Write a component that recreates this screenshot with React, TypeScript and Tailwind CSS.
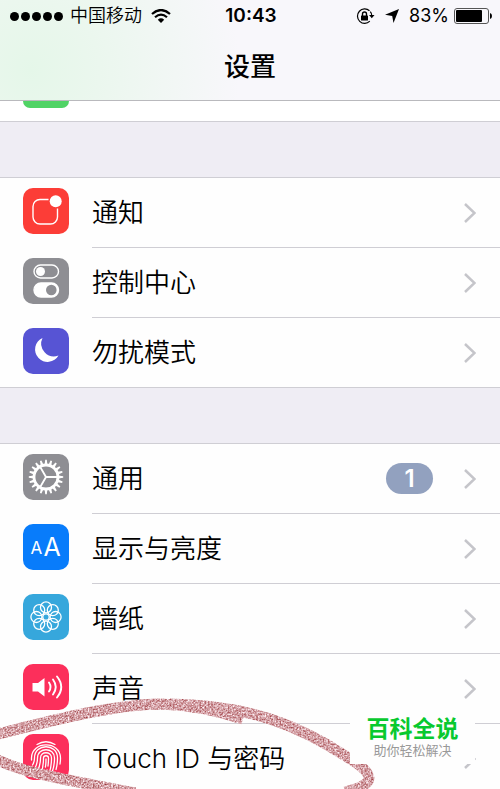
import type { ReactNode } from "react";

type Item = {
  label: string;
  color: string;
  icon: ReactNode;
  badge?: number;
};

const TEETH = Array.from({ length: 20 }, (_, i) => i * 18);
const PETALS = Array.from({ length: 8 }, (_, i) => i * 45);

function NotificationIcon() {
  return (
    <g fill="none" stroke="#fff" strokeWidth="1.4">
      <path d="M25.5 11.5H17a7 7 0 0 0-7 7v10.500a7 7 0 0 0 7 7h10.500a7 7 0 0 0 7-7V20.500" />
      <circle cx="32.700" cy="13.300" r="6" fill="#fff" stroke="none" />
    </g>
  );
}

function ControlIcon() {
  return (
    <g stroke="#fff" strokeWidth="1.4">
      <rect x="11" y="7" width="24.500" height="13" rx="6.500" fill="none" />
      <circle cx="17.500" cy="13.500" r="4.500" fill="#fff" stroke="none" />
      <rect x="11" y="25" width="24.500" height="14" rx="7" fill="#fff" />
      <circle cx="28.300" cy="32" r="5.300" fill="#8e8e93" stroke="none" />
    </g>
  );
}

function MoonIcon() {
  return <path fill="#fff" d="M19.500 10A12.500 12.500 0 1 0 35.500 27.500 12.800 12.800 0 0 1 19.500 10z" />;
}

function GearIcon() {
  return (
    <g fill="none" stroke="#fff">
      <circle cx="23" cy="23" r="12" strokeWidth="2.800" />
      {TEETH.map((angle) => (
        <path key={angle} d="M21.600 10.500l.6-4.700h1.600l.6 4.700z" fill="#fff" stroke="none" transform={`rotate(${angle} 23 23)`} />
      ))}
      <path d="M23 23h12M23 23l-6-10.400M23 23l-6 10.400" strokeWidth="1.900" />
    </g>
  );
}

function DisplayIcon() {
  return (
    <g fill="#fff" fontFamily="Inter, sans-serif">
      <text x="7.500" y="30" fontSize="17">A</text>
      <text x="20.500" y="31.500" fontSize="25">A</text>
    </g>
  );
}

function FlowerIcon() {
  return (
    <g fill="none" stroke="#fff" strokeWidth="1.300">
      {PETALS.map((angle) => (
        <circle key={angle} cx="23" cy="13.400" r="5.500" transform={`rotate(${angle} 23 23)`} />
      ))}
      <circle cx="23" cy="23" r="3.200" />
    </g>
  );
}

function SpeakerIcon() {
  return (
    <g fill="none" stroke="#fff" strokeWidth="1.900" strokeLinecap="round">
      <path d="M9.500 19H15l6.500-5v18.500L15 27.500H9.500z" fill="#fff" stroke="none" />
      <path d="M26 18.500q3 4.500 0 9M30 15.500q5.500 7.500 0 15M34 12.500q8.500 10.500 0 21" />
    </g>
  );
}

function FingerprintIcon() {
  return (
    <g fill="none" stroke="#fff" strokeWidth="1.300" strokeLinecap="round">
      <path d="M14 10.500Q23 5 32 10.500" />
      <path d="M8.500 26v-2C8.500 6.500 37.500 6.500 37.500 24q0 3-.5 6" />
      <path d="M9.500 31q2-3 2-7c0-15 23-15 23 0 0 5-.5 8-1.500 11.500" />
      <path d="M12 34q2.500-4.500 2.500-10c0-11 17-11 17 0 0 6-.8 10-2.300 14" />
      <path d="M14.500 37q3-6 3-13c0-7 11-7 11 0 0 6-.8 11-2.300 15" />
      <path d="M18 39q2.500-6 2.500-15c0-3 5-3 5 0 0 3-.1 5-.5 8" />
      <path d="M23 25q0 5-.6 8M24 36l-.8 3" />
    </g>
  );
}

const ALERTS: Item[] = [
  { label: "通知", color: "bg-[#fc3d37]", icon: <NotificationIcon /> },
  { label: "控制中心", color: "bg-[#8e8e93]", icon: <ControlIcon /> },
  { label: "勿扰模式", color: "bg-[#5754d4]", icon: <MoonIcon /> },
];

const GENERAL: Item[] = [
  { label: "通用", color: "bg-[#8e8e93]", icon: <GearIcon />, badge: 1 },
  { label: "显示与亮度", color: "bg-[#087cfb]", icon: <DisplayIcon /> },
  { label: "墙纸", color: "bg-[#36a7dc]", icon: <FlowerIcon /> },
  { label: "声音", color: "bg-[#fc2f5b]", icon: <SpeakerIcon /> },
  { label: "Touch ID 与密码", color: "bg-[#fc2f5b]", icon: <FingerprintIcon /> },
];

export default function App() {
  return (
    <div className="relative h-screen overflow-hidden bg-[#efedf4] font-[Inter,'Noto_Sans_CJK_SC',sans-serif] text-black">
      <header className="h-[101px] border-b border-[#b9b9bd] bg-[#f8f7fb] bg-[radial-gradient(circle_at_30px_70px,#e5f7e9_0px,#ebf7ee_70px,#f8f7fb_210px)]">
        <StatusBar />
        <h1 className="pt-3 text-center text-[26px] leading-[46px] font-medium">设置</h1>
      </header>
      <div className="h-[21px] border-b border-[#cfced4] bg-white pl-[23px]">
        <div className="h-[7px] w-[46px] rounded-b-[10px] bg-[#50d365]" />
      </div>
      <main className="flex flex-col gap-[55px] pt-[55px]">
        <Group items={ALERTS} />
        <Group items={GENERAL} />
      </main>
      <Scribble />
      <aside className="absolute top-[704px] right-[25px] flex h-[60px] w-[125px] flex-col items-center bg-[#fefefe] pt-2">
        <strong className="text-[23px] leading-[34px] font-bold text-[#08c92f]">百科全说</strong>
        <span className="text-[13px] leading-2 text-[#999]">助你轻松解决</span>
      </aside>
    </div>
  );
}

function StatusBar() {
  return (
    <div className="grid h-8 grid-cols-[1fr_auto_1fr] items-center pr-2 pl-[10px]">
      <div className="flex items-center gap-[7px]">
        <div className="flex gap-[2px]">
          {[1, 2, 3, 4, 5].map((dot) => (
            <span key={dot} className="size-[9px] rounded-full bg-black" />
          ))}
        </div>
        <span className="text-[18px] leading-8 font-[350]">中国移动</span>
        <svg className="ml-[2px] h-[14px] w-[20px]" viewBox="0 0 20 14" fill="none" stroke="#000" strokeWidth="2.200">
          <path d="M1 5q9-8 18 0M4 8.300q6-5.300 12 0" />
          <path d="M6.800 10.700q3.200-2.700 6.400 0L10 14z" fill="#000" stroke="none" />
        </svg>
      </div>
      <time className="text-[19px] leading-8 font-semibold">10:43</time>
      <div className="flex items-center justify-end">
        <svg className="mr-[10px] h-[17px] w-[19px]" viewBox="0 0 19 17" fill="none" stroke="#000" strokeWidth="1.200">
          <path d="M13.500 2.800A7.200 7.200 0 1 0 13.800 13.200M14.300 3.600q1.600 2 1.500 4" />
          <path d="M13 7h5.500l-2.700 3.300z" fill="#000" stroke="none" />
          <rect x="5" y="7.500" width="7" height="5" rx=".6" fill="#000" stroke="none" />
          <path d="M6.500 8V6a2 2 0 0 1 4 0v2" strokeWidth="1.400" />
        </svg>
        <svg className="mr-[10px] size-[14px]" viewBox="0 0 14 14">
          <path d="M14 0L8.500 14 7.200 7 0 5.800z" />
        </svg>
        <span className="mr-[5px] text-[18px] leading-8">83%</span>
        <svg className="h-[16px] w-[38px]" viewBox="0 0 38 16">
          <rect x=".5" y=".5" width="34" height="15" rx="2.500" fill="none" stroke="#555" />
          <rect x="2" y="2" width="26" height="12" rx="1" />
          <path d="M36 5q2 .5 2 3t-2 3z" />
        </svg>
      </div>
    </div>
  );
}

function Group({ items }: { items: Item[] }) {
  return (
    <ul className="border-y border-[#cfced4] bg-[#fefefe]">
      {items.map((item) => (
        <Row key={item.label} item={item} />
      ))}
    </ul>
  );
}

function Row({ item }: { item: Item }) {
  return (
    <li className="group/row">
      <a href="#" className="flex pl-[23px]">
        <span className="pt-[10px] pr-[23px]">
          <span className={`block size-[46px] overflow-hidden rounded-[10px] ${item.color}`}>
            <svg viewBox="0 0 46 46">{item.icon}</svg>
          </span>
        </span>
        <span className="flex grow items-center border-b border-[#cfced4] pr-6 group-last/row:border-b-0">
          <span className="grow text-[26px] leading-[69px] font-[350]">{item.label}</span>
          {item.badge && (
            <span className="mr-[31px] w-[47px] rounded-full bg-[#92a1bf] text-center text-[24px] leading-[31px] font-semibold text-white">
              {item.badge}
            </span>
          )}
          <svg className="h-5 w-3" viewBox="0 0 12 20" fill="none" stroke="#c5c5ca" strokeWidth="2.500">
            <path d="M1 1l9.500 9L1 19" />
          </svg>
        </span>
      </a>
    </li>
  );
}

// Crayon loop drawn around the Touch ID row
function Scribble() {
  return (
    <svg className="pointer-events-none absolute top-[689px] left-0 h-[100px] w-[500px]" viewBox="0 0 500 100" fill="none">
      <filter id="crayon" x="0" y="0" width="500" height="100" filterUnits="userSpaceOnUse" colorInterpolationFilters="sRGB">
        <feTurbulence type="fractalNoise" baseFrequency="0.6" numOctaves="2" seed="4" />
        <feColorMatrix values=".6 0 0 0 .53  1.100 0 0 0 .08  1.100 0 0 0 .1  0 0 0 0 1" />
        <feComposite in2="SourceGraphic" operator="in" />
      </filter>
      <g filter="url(#crayon)" stroke="#d98a92" strokeWidth="11">
        <path d="M243 30Q200 16 160 15C110 16 50 32 -2 45C-16 52 -12 67 0 72C30 86 75 92 135 104" />
        <path d="M170 15C250 16 300 37 347 68C378 86 375 96 345 103" />
      </g>
    </svg>
  );
}
